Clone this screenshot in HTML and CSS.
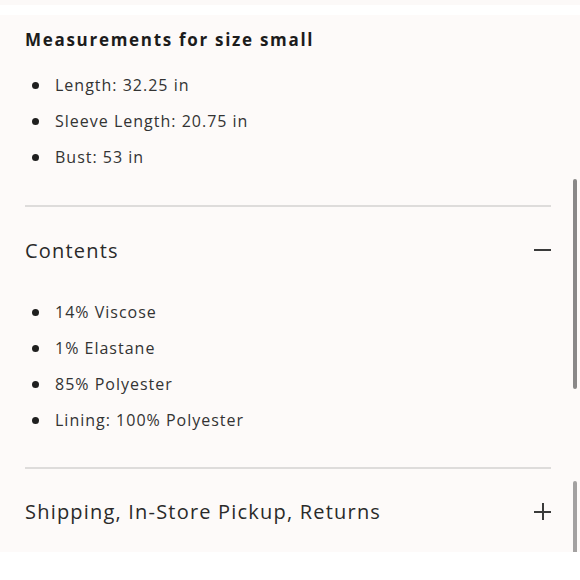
FILE: index.html
```html
<!DOCTYPE html>
<html>
<head>
<meta charset="utf-8">
<link rel="stylesheet" href="styles.css">
</head>
<body>
<div class="top-strip"></div>
<div class="panel">
  <section class="measure">
    <h3 class="measure-title">Measurements for size small</h3>
    <ul class="list">
      <li>Length: 32.25 in</li>
      <li>Sleeve Length: 20.75 in</li>
      <li>Bust: 53 in</li>
    </ul>
  </section>
  <section class="acc open">
    <div class="acc-head">
      <span class="acc-title">Contents</span>
      <span class="icon-minus"></span>
    </div>
    <ul class="list">
      <li>14% Viscose</li>
      <li>1% Elastane</li>
      <li>85% Polyester</li>
      <li>Lining: 100% Polyester</li>
    </ul>
  </section>
  <section class="acc">
    <div class="acc-head">
      <span class="acc-title">Shipping, In-Store Pickup, Returns</span>
      <span class="icon-plus"></span>
    </div>
  </section>
  <div class="scroll scroll-a"></div>
  <div class="scroll scroll-b"></div>
</div>
</body>
</html>
```

FILE: styles.css
```css
html, body {
  margin: 0;
  padding: 0;
  background: #ffffff;
}
body {
  font-family: "Open Sans", "Liberation Sans", sans-serif;
  color: #2e2e2e;
  width: 580px;
  height: 580px;
  overflow: hidden;
}
.top-strip {
  height: 5px;
  background: #fcf9f8;
  margin-bottom: 10px;
}
.panel {
  position: relative;
  height: 537px;
  background: #fdfaf9;
  padding: 0 29px 0 25px;
  box-sizing: border-box;
}
.measure {
  padding-top: 15px;
  padding-bottom: 30px;
  border-bottom: 2px solid #dedcdb;
}
.measure-title {
  margin: 0;
  font-size: 17px;
  font-weight: 700;
  letter-spacing: 1.7px;
  color: #1c1c1c;
  line-height: 20px;
}
.list {
  list-style: none;
  margin: 0;
  padding: 0;
}
.measure .list {
  margin-top: 17px;
}
.list li {
  display: flex;
  align-items: center;
  height: 36px;
  font-size: 16px;
  letter-spacing: 1px;
  color: #333;
}
.list li::before {
  content: "";
  width: 7px;
  height: 7px;
  border-radius: 50%;
  background: #1f1f1f;
  margin-left: 7px;
  margin-right: 16px;
  flex: none;
}
.acc {
  border-bottom: 2px solid #dedcdb;
}
.acc:last-of-type {
  border-bottom: none;
}
.acc-head {
  display: flex;
  align-items: center;
  justify-content: space-between;
  height: 86px;
}
.acc-title {
  font-size: 20px;
  letter-spacing: 1.2px;
  color: #2a2a2a;
}
.acc.open .list {
  margin-top: 1px;
  padding-bottom: 29px;
}
.acc.open + .acc .acc-head {
  height: 85px;
}
.icon-minus {
  width: 17px;
  height: 1.5px;
  background: #3a3a3a;
}
.icon-plus {
  position: relative;
  width: 17px;
  height: 17px;
}
.icon-plus::before,
.icon-plus::after {
  content: "";
  position: absolute;
  background: #3a3a3a;
}
.icon-plus::before {
  left: 0;
  right: 0;
  top: 8px;
  height: 1.5px;
}
.icon-plus::after {
  top: 0;
  bottom: 0;
  left: 8px;
  width: 1.5px;
}
.scroll {
  position: absolute;
  right: 3px;
  width: 4px;
  border-radius: 2px;
}
.scroll-a {
  top: 164px;
  height: 210px;
  background: #8a8888;
}
.scroll-b {
  top: 466px;
  height: 71px;
  background: #a3a1a1;
  border-radius: 2px 2px 0 0;
}
```
